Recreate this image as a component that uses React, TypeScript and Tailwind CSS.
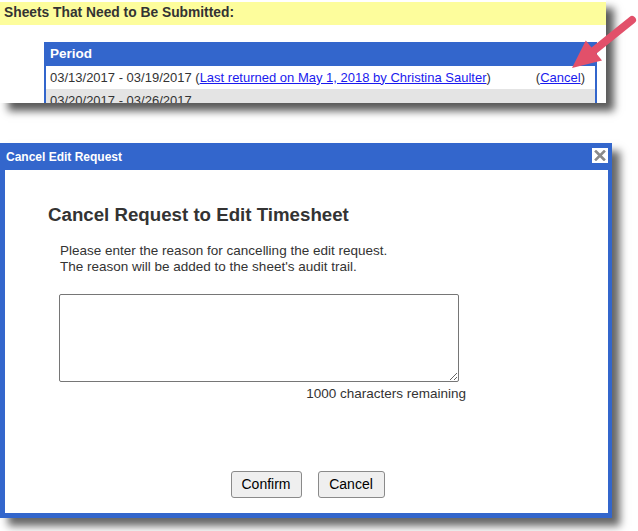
import React from "react";

export default function App() {
  return (
    <div
      className="relative w-[638px] h-[531px] bg-white overflow-hidden text-[#333]"
      style={{ fontFamily: '"Liberation Sans", Arial, sans-serif' }}
    >
      {/* Top screenshot panel */}
      <div className="w-[606px] h-[103px] bg-white overflow-hidden pt-[2px] shadow-[8px_8px_8px_rgba(0,0,0,0.65)]">
        <div className="h-[23px] bg-[#fdfd9c] flex items-center pl-[4px] text-[13.8px] font-bold text-[#333]">
          Sheets That Need to Be Submitted:
        </div>
        <div className="ml-[44px] mt-[17px] w-[553px] border-l-2 border-r-2 border-[#3366cc]">
          <div className="h-[24px] bg-[#3366cc] text-white font-bold text-[13.5px] flex items-center pl-[4px]">
            Period
          </div>
          <div className="h-[23px] bg-white flex items-center justify-between pl-[4px] pr-[10px] text-[13px]">
            <span>
              03/13/2017 - 03/19/2017 (
              <span className="text-[#1a1aee] underline">
                Last returned on May 1, 2018 by Christina Saulter
              </span>
              )
            </span>
            <span>
              (<span className="text-[#1a1aee] underline">Cancel</span>)
            </span>
          </div>
          <div className="h-[23px] bg-[#e4e4e4] flex items-center pl-[4px] text-[13px]">
            03/20/2017 - 03/26/2017
          </div>
        </div>
      </div>

      {/* Dialog */}
      <div className="mt-[40px] w-[612px] h-[375px] flex flex-col bg-[#3366cc] shadow-[8px_8px_8px_rgba(0,0,0,0.6)]">
        <div className="relative h-[27px] flex items-center pl-[6px] text-white font-bold text-[12px] shrink-0">
          Cancel Edit Request
          <div className="absolute right-[4px] top-[5px] w-[16px] h-[15px] bg-white flex items-center justify-center">
            <svg width="12" height="11" viewBox="0 0 12 11">
              <path d="M2 1.5 L10 9.5 M10 1.5 L2 9.5" stroke="#8a8a8a" strokeWidth="2.6" strokeLinecap="square" />
            </svg>
          </div>
        </div>
        <div className="flex-1 ml-[5px] mr-[4px] mb-[5px] bg-white flex flex-col">
          <div className="pl-[43px] pt-[34px] text-[18.7px] leading-[22px] font-bold text-[#333]">
            Cancel Request to Edit Timesheet
          </div>
          <div className="pl-[55px] pt-[17px] text-[13.5px] leading-[16px]">
            <div>Please enter the reason for cancelling the edit request.</div>
            <div>The reason will be added to the sheet&apos;s audit trail.</div>
          </div>
          <div className="pl-[54px] pt-[19px]">
            <textarea className="block w-[400px] h-[88px] border border-[#767676] rounded-[2px] bg-white outline-none resize" />
            <div className="mt-[4px] w-[407px] text-right text-[13.5px] leading-[15px]">1000 characters remaining</div>
          </div>
          <div className="flex-1" />
          <div className="flex justify-center gap-[16px] pb-[15px] pl-[2px]">
            <button className="w-[71px] h-[27px] bg-[#efefef] border border-[#8a8a8a] rounded-[3px] text-[14px] text-black">
              Confirm
            </button>
            <button className="w-[67px] h-[27px] bg-[#efefef] border border-[#8a8a8a] rounded-[3px] text-[14px] text-black">
              Cancel
            </button>
          </div>
        </div>
      </div>

      {/* Red arrow annotation */}
      <svg className="absolute left-0 top-0 pointer-events-none" width="638" height="120" viewBox="0 0 638 120">
        <line x1="632" y1="20" x2="594" y2="50.5" stroke="#e2506a" strokeWidth="8" strokeLinecap="round" />
        <polygon points="572,68 602,60.6 585.8,40.4" fill="#e2506a" />
      </svg>
    </div>
  );
}
